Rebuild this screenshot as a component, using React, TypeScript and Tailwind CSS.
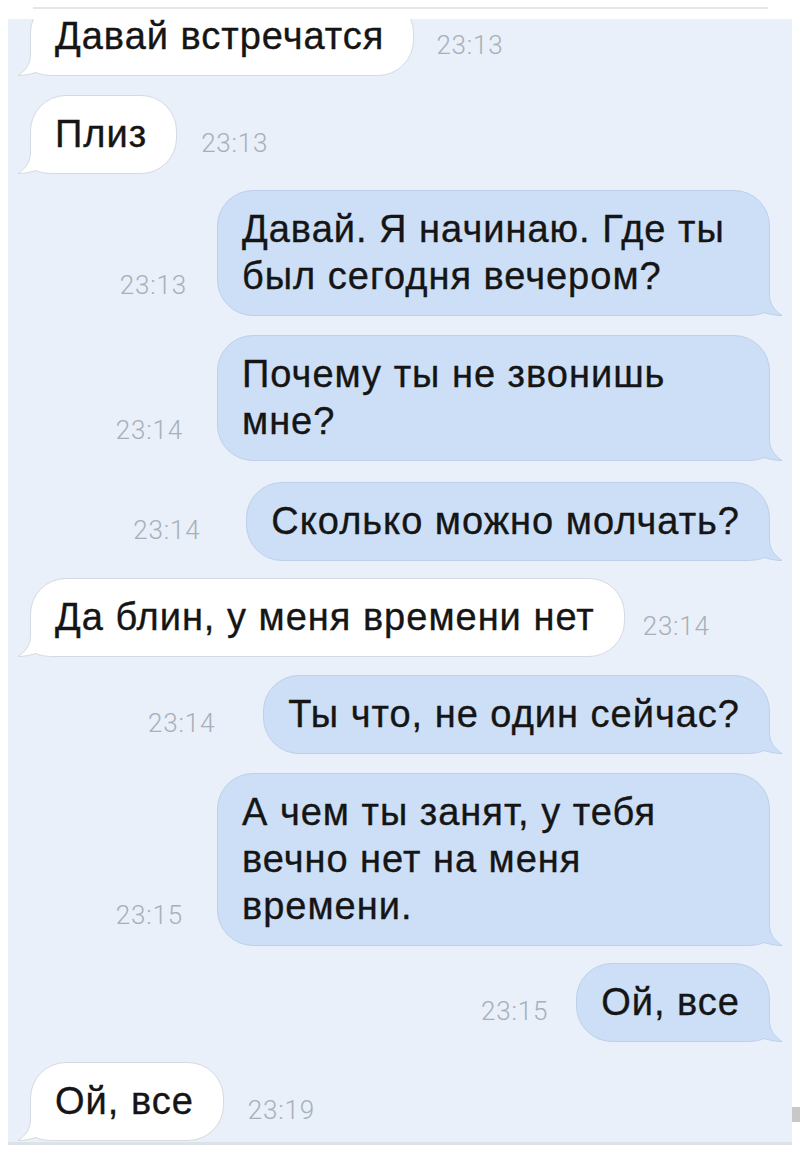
import React from "react";

type Side = "in" | "out";

// iOS-style speech tail drawn over the bubble's bottom corner
function Tail({ side }: { side: Side }) {
  const W = 52;
  const H = 40;
  const R = 38; // outer edge of the bubble inside the svg box
  const fill = side === "out" ? "#cddff6" : "#ffffff";
  const stroke = side === "out" ? "#bcd0ea" : "#d5dae1";
  const outline = `M ${R - 0.5} 0 V 18 C ${R - 0.5} 28 ${R + 4} 34 ${R + 12} ${H - 0.5} C ${R + 5} ${H - 0.5} ${R - 1} ${H - 2} ${R - 6} ${H - 3.5} C ${R - 10} ${H - 1.5} ${R - 16} ${H - 0.5} ${R - 24} ${H - 0.5} H 0`;
  const body = `${outline} V 0 Z`;
  return (
    <svg
      width={W}
      height={H}
      viewBox={`0 0 ${W} ${H}`}
      className={
        side === "out"
          ? "absolute bottom-[-1px] right-[-15px] z-0 block"
          : "absolute bottom-[-1px] left-[-15px] z-0 block"
      }
    >
      <g transform={side === "out" ? undefined : `translate(${W} 0) scale(-1 1)`}>
        <path d={body} fill={fill} />
        <path d={outline} fill="none" stroke={stroke} strokeWidth={1} />
      </g>
    </svg>
  );
}

function Bubble({
  side,
  lines,
  wide,
}: {
  side: Side;
  lines: string[];
  wide?: boolean;
}) {
  return (
    <div
      className={`relative rounded-[36px] border pl-[24px] pr-[29px] pt-[15px] pb-[15px] text-[38px] leading-[47px] tracking-[1px] text-[#151515] [-webkit-text-stroke:0.35px_#151515] ${
        side === "out" ? "bg-[#cddff6] border-[#bcd0ea]" : "bg-white border-[#d5dae1]"
      } ${wide ? "w-[553px]" : ""}`}
    >
      {lines.map((l, i) => (
        <div key={i} className="relative z-[1] whitespace-nowrap">
          {l}
        </div>
      ))}
      <Tail side={side} />
    </div>
  );
}

function Time({ t, gap }: { t: string; gap: string }) {
  return (
    <div
      className={`mb-[16px] shrink-0 font-['Roboto',sans-serif] text-[26px] font-light leading-[30px] tracking-[0.8px] text-[#a8afb8] ${gap}`}
    >
      {t}
    </div>
  );
}

type Msg = {
  side: Side;
  lines: string[];
  t: string;
  gap: string;
  tgap: string;
  wide?: boolean;
};

const messages: Msg[] = [
  { side: "in", lines: ["Давай встречатся"], t: "23:13", gap: "mt-[-22px]", tgap: "ml-[22px]" },
  { side: "in", lines: ["Плиз"], t: "23:13", gap: "mt-[19px]", tgap: "ml-[24px]" },
  { side: "out", lines: ["Давай. Я начинаю. Где ты", "был сегодня вечером?"], t: "23:13", gap: "mt-[16px]", tgap: "mr-[30px]", wide: true },
  { side: "out", lines: ["Почему ты не звонишь", "мне?"], t: "23:14", gap: "mt-[19px]", tgap: "mr-[34px]", wide: true },
  { side: "out", lines: ["Сколько можно молчать?"], t: "23:14", gap: "mt-[21px]", tgap: "mr-[46px]" },
  { side: "in", lines: ["Да блин, у меня времени нет"], t: "23:14", gap: "mt-[17px]", tgap: "ml-[18px]" },
  { side: "out", lines: ["Ты что, не один сейчас?"], t: "23:14", gap: "mt-[18px]", tgap: "mr-[48px]" },
  { side: "out", lines: ["А чем ты занят, у тебя", "вечно нет на меня", "времени."], t: "23:15", gap: "mt-[19px]", tgap: "mr-[34px]", wide: true },
  { side: "out", lines: ["Ой, все"], t: "23:15", gap: "mt-[17px]", tgap: "mr-[28px]" },
  { side: "in", lines: ["Ой, все"], t: "23:19", gap: "mt-[20px]", tgap: "ml-[24px]" },
];

export default function App() {
  return (
    <div className="relative h-[1154px] w-[800px] overflow-hidden bg-white font-['Liberation_Sans',Arial,sans-serif]">
      {/* header rule above the thread */}
      <div className="h-[19px] pt-[7px]">
        <div className="ml-[33px] h-[2px] w-[735px] bg-[#e6e6e6]" />
      </div>

      {/* message thread */}
      <div className="mx-[8px] h-[1126px] overflow-hidden border-b-[3px] border-[#dde2e8] bg-[#e9f0fa] pl-[22px] pr-[22px]">
        <div className="flex flex-col">
          {messages.map((m, i) => (
            <div
              key={i}
              className={`flex items-end ${m.gap} ${m.side === "out" ? "justify-end" : "justify-start"}`}
            >
              {m.side === "out" && <Time t={m.t} gap={m.tgap} />}
              <Bubble side={m.side} lines={m.lines} wide={m.wide} />
              {m.side === "in" && <Time t={m.t} gap={m.tgap} />}
            </div>
          ))}
        </div>
      </div>

      {/* scrollbar stub on the right edge */}
      <div className="absolute left-[792px] top-[1107px] h-[15px] w-[8px] bg-[#c8c8c8]" />
    </div>
  );
}
